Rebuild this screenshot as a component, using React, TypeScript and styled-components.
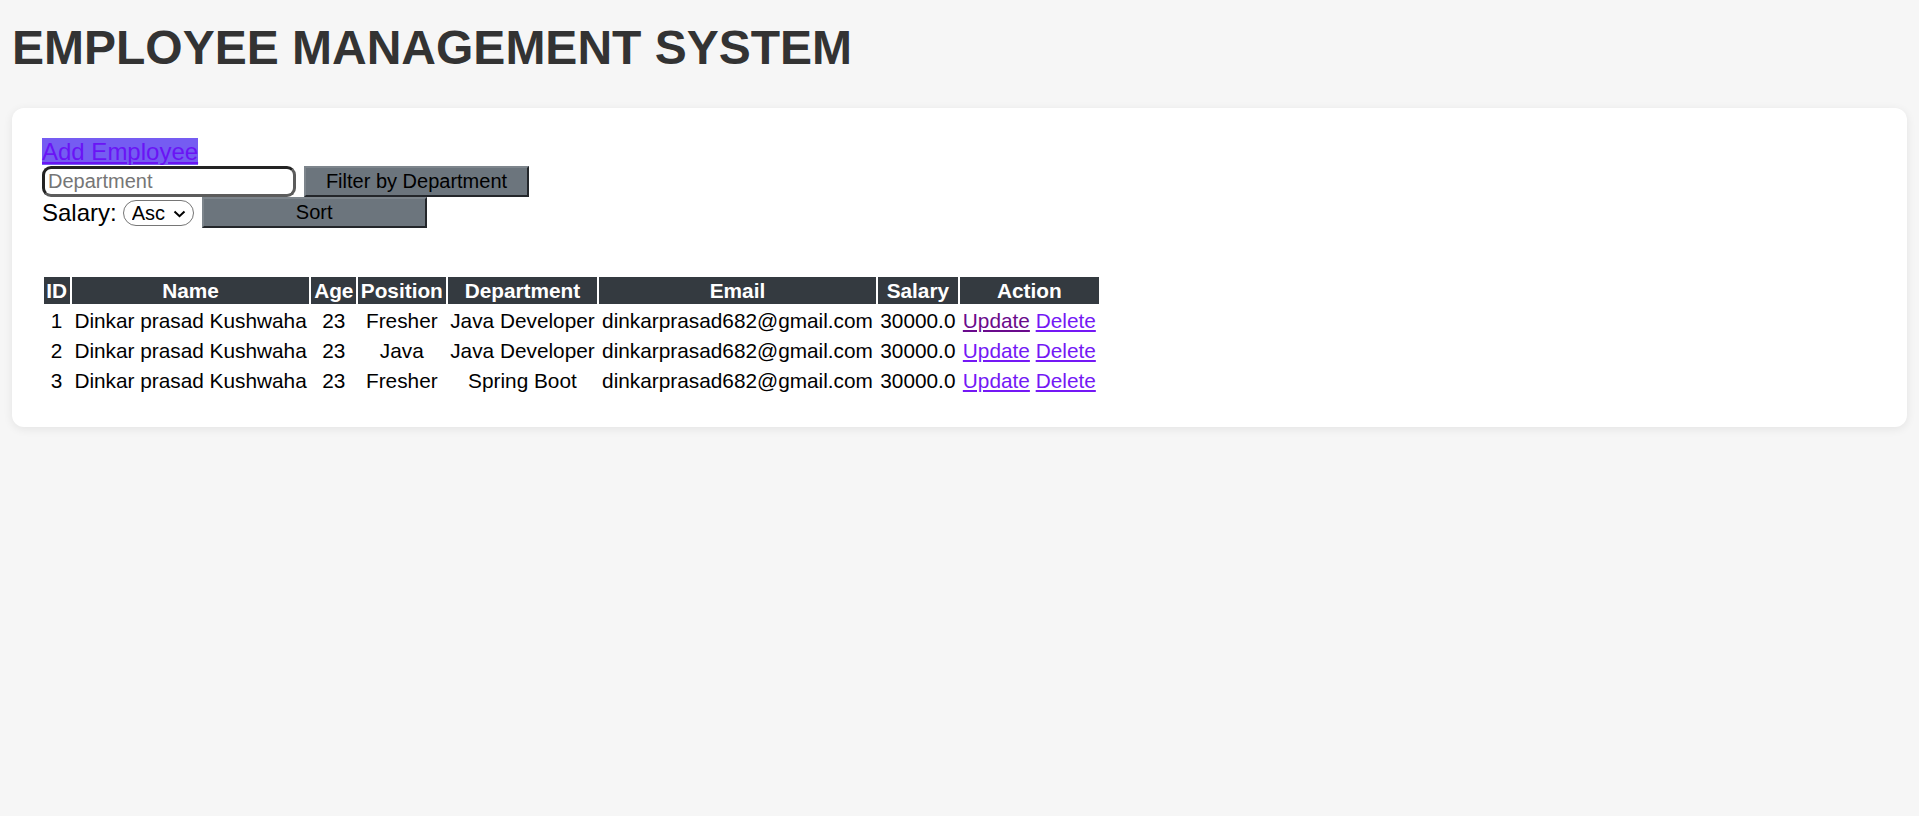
import React from 'react';
import styled, { createGlobalStyle } from 'styled-components';

const GlobalStyle = createGlobalStyle`
  body {
    margin: 0;
    background: #f6f6f6;
    font-family: 'Liberation Sans', Arial, sans-serif;
  }
`;

const Page = styled.div`
  padding: 20px 12px;
`;

const Title = styled.h1`
  margin: 0 0 33px;
  font-size: 48px;
  line-height: 55px;
  font-weight: bold;
  color: #333;
`;

const Card = styled.div`
  background: #fff;
  border-radius: 12px;
  box-shadow: 0 2px 10px rgba(0, 0, 0, 0.08);
  padding: 30px;
`;

const Row = styled.div<{ $gap?: number; $height: number }>`
  display: flex;
  align-items: center;
  gap: ${p => p.$gap || 0}px;
  height: ${p => p.$height}px;
`;

const AddLink = styled.a`
  display: inline-block;
  font-size: 24px;
  line-height: 27px;
  color: #6a14f5;
  background: #755cf2;
  text-decoration: underline;
  cursor: pointer;
`;

const DeptInput = styled.input`
  box-sizing: border-box;
  width: 254px;
  height: 31px;
  padding: 0 3px;
  font-family: 'Liberation Sans', Arial, sans-serif;
  font-size: 20px;
  border: 3px solid #232323;
  border-right-color: #5c5c5c;
  border-bottom-color: #5c5c5c;
  border-radius: 9px;
  outline: none;

  &::placeholder {
    color: #767676;
  }
`;

const GrayButton = styled.button<{ $offset?: number }>`
  box-sizing: border-box;
  width: 225px;
  height: 31px;
  margin-left: ${p => p.$offset || 0}px;
  padding: 0;
  background: #6c757d;
  color: #000;
  font-family: 'Liberation Sans', Arial, sans-serif;
  font-size: 20px;
  border: 2px solid #23262a;
  border-top-color: #7d858c;
  border-left-color: #7d858c;
  cursor: pointer;
`;

const Label = styled.span`
  font-size: 24px;
  color: #000;
`;

const SelectWrap = styled.span`
  position: relative;
  display: inline-flex;
`;

const SalarySelect = styled.select`
  box-sizing: border-box;
  appearance: none;
  width: 71px;
  height: 26px;
  padding: 0 0 0 8px;
  font-family: 'Liberation Sans', Arial, sans-serif;
  font-size: 20px;
  color: #000;
  background: #fff;
  border: 1px solid #767676;
  border-radius: 13px;
`;

const Chevron = styled.svg`
  position: absolute;
  right: 8px;
  top: 10px;
  pointer-events: none;
`;

const Table = styled.table`
  margin-top: 46px;
  margin-left: -0.5px;
  border-spacing: 2.5px 3px;
  font-size: 20.8px;
  line-height: 23px;
`;

const Th = styled.th`
  background: #343a40;
  color: #fff;
  font-weight: bold;
  padding: 2px 2.7px;
`;

const Td = styled.td`
  text-align: center;
  color: #000;
  padding: 2px 2.7px;
  white-space: nowrap;
`;

const ActionLink = styled.a<{ $visited?: boolean }>`
  color: ${p => (p.$visited ? '#6a0a8c' : '#7418f5')};
  text-decoration: underline;
  cursor: pointer;
`;

const employees = [
  { id: 1, name: 'Dinkar prasad Kushwaha', age: 23, position: 'Fresher', department: 'Java Developer' },
  { id: 2, name: 'Dinkar prasad Kushwaha', age: 23, position: 'Java', department: 'Java Developer' },
  { id: 3, name: 'Dinkar prasad Kushwaha', age: 23, position: 'Fresher', department: 'Spring Boot' },
];

const headers = ['ID', 'Name', 'Age', 'Position', 'Department', 'Email', 'Salary', 'Action'];

const App = () => {
  return (
    <>
      <GlobalStyle />
      <Page>
        <Title>EMPLOYEE MANAGEMENT SYSTEM</Title>
        <Card>
          <Row $height={27}>
            <AddLink>Add Employee</AddLink>
          </Row>
          <Row $height={32} $gap={8}>
            <DeptInput placeholder="Department" />
            <GrayButton>Filter by Department</GrayButton>
          </Row>
          <Row $height={31} $gap={6}>
            <Label>Salary:</Label>
            <SelectWrap>
              <SalarySelect defaultValue="asc">
                <option value="asc">Asc</option>
                <option value="desc">Desc</option>
              </SalarySelect>
              <Chevron width="13" height="8" viewBox="0 0 13 8">
                <path d="M1.5 1.5 L6.5 6.2 L11.5 1.5" fill="none" stroke="#000" strokeWidth="2" />
              </Chevron>
            </SelectWrap>
            <GrayButton $offset={2}>Sort</GrayButton>
          </Row>
          <Table>
            <thead>
              <tr>
                {headers.map(h => (
                  <Th key={h}>{h}</Th>
                ))}
              </tr>
            </thead>
            <tbody>
              {employees.map((emp, index) => (
                <tr key={emp.id}>
                  <Td>{emp.id}</Td>
                  <Td>{emp.name}</Td>
                  <Td>{emp.age}</Td>
                  <Td>{emp.position}</Td>
                  <Td>{emp.department}</Td>
                  <Td>dinkarprasad682@gmail.com</Td>
                  <Td>30000.0</Td>
                  <Td>
                    <ActionLink $visited={index === 0}>Update</ActionLink>{' '}
                    <ActionLink>Delete</ActionLink>
                  </Td>
                </tr>
              ))}
            </tbody>
          </Table>
        </Card>
      </Page>
    </>
  );
};

export default App;
